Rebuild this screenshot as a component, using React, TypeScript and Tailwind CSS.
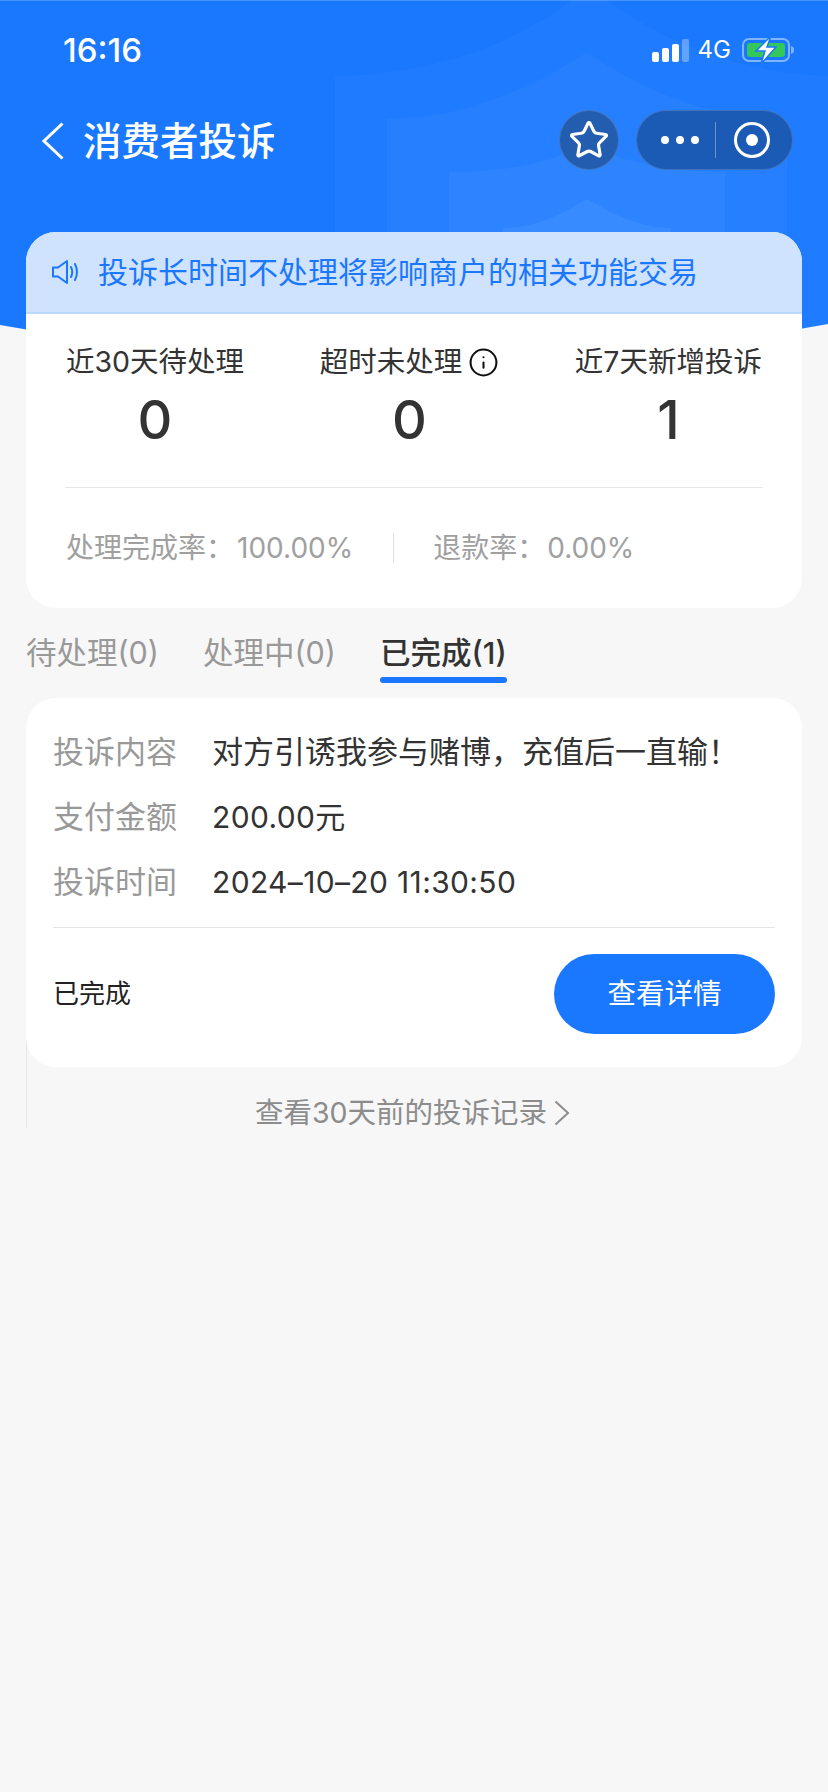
import { Star, Info } from 'lucide-react';

const FONT = 'font-[Inter,"Noto_Sans_CJK_SC",sans-serif]';

function StatusBar() {
  return (
    <div className="flex h-[100px] items-center justify-between pl-[63px] pr-[34px]">
      <span className="text-[33px] font-medium leading-[40px] text-white">16:16</span>
      <div className="flex items-center">
        {/* signal bars */}
        <svg width="37" height="23" viewBox="0 0 37 23" className="mr-[9px]">
          <rect x="0" y="13" width="7" height="10" rx="2" fill="#fff" />
          <rect x="10" y="9" width="7" height="14" rx="2" fill="#fff" />
          <rect x="20" y="5" width="7" height="18" rx="2" fill="#fff" />
          <rect x="30" y="0" width="7" height="23" rx="2" fill="#fff" fillOpacity="0.3" />
        </svg>
        <span className="text-[24px] leading-[30px] text-white">4G</span>
        <svg width="52" height="28" viewBox="0 0 52 28" className="ml-[11px]">
          <rect x="1" y="3" width="46" height="22" rx="6" fill="none" stroke="#fff" strokeOpacity="0.45" strokeWidth="2" />
          <rect x="5" y="7" width="38" height="14" rx="3" fill="#34c759" />
          <path d="M49 10c2 .5 3 2 3 4s-1 3.500-3 4z" fill="#fff" fillOpacity="0.45" />
          <path d="M29 0 14 15h9l-4 13 15-17h-9z" fill="#fff" stroke="#1a78ff" strokeWidth="1.500" />
        </svg>
      </div>
    </div>
  );
}

function NavBar() {
  return (
    <div className="mt-[11px] flex h-[60px] items-center pl-[42px] pr-[35px]">
      <svg width="22" height="38" viewBox="0 0 22 38" fill="none" className="shrink-0">
        <path d="M20.500 1.500 2 19l18.500 17.500" stroke="#fff" strokeWidth="3" />
      </svg>
      <span className="ml-[19px] text-[38.500px] font-medium leading-[60px] text-white">消费者投诉</span>
      <div className="mb-[2px] ml-auto flex items-center gap-[17px]">
        <div className="flex h-[60px] w-[60px] items-center justify-center rounded-full border border-white/15 bg-[#235db0]">
          <Star className="h-[42px] w-[42px] text-white" strokeWidth={1.800} />
        </div>
        <div className="flex h-[60px] w-[157px] items-center rounded-full border border-white/15 bg-[#1c5bb5] pl-[24px]">
          <div className="flex items-center gap-[7px]">
            <span className="h-[8px] w-[8px] rounded-full bg-white" />
            <span className="h-[8px] w-[8px] rounded-full bg-white" />
            <span className="h-[8px] w-[8px] rounded-full bg-white" />
          </div>
          <div className="ml-[16px] h-[36px] w-px bg-white/35" />
          <div className="ml-[18px] flex h-[36px] w-[36px] items-center justify-center rounded-full border-[3px] border-white">
            <span className="h-[12px] w-[12px] rounded-full bg-white" />
          </div>
        </div>
      </div>
    </div>
  );
}

function HeaderBg() {
  return (
    <svg width="828" height="340" viewBox="0 0 828 340" className="absolute left-0 top-0">
      <path d="M0 325 Q414 400 828 324 V0 H0Z" fill="#1a78ff" />
      <rect x="0" y="0" width="828" height="1" fill="#fff" fillOpacity="0.2" />
      {/* faint shield watermark */}
      <path d="M335 76 C440 74 520 40 572 0 H606 C670 45 740 72 828 76 V340 H335Z" fill="#fff" fillOpacity="0.025" />
      <path d="M387 119 C460 119 530 90 587 52 C640 90 710 119 787 119 V340 H387Z" fill="#fff" fillOpacity="0.035" />
      <path d="M449 172 C500 172 545 165 587 145 C630 165 680 172 725 172 V340 H449Z" fill="#fff" fillOpacity="0.04" />
      <path d="M503 228 C535 228 560 215 587 199 C615 215 640 228 671 228 V340 H503Z" fill="#fff" fillOpacity="0.05" />
    </svg>
  );
}

function Metric({ label, value, info }: { label: string; value: string; info?: boolean }) {
  return (
    <div className="flex flex-col items-center">
      <div className="flex items-center whitespace-nowrap text-[28.500px] leading-[40px] text-[#333]">
        {label}
        {info && <Info className="ml-[6px] h-[31px] w-[31px] text-[#111]" strokeWidth={1.600} />}
      </div>
      <div className="mt-[6px] text-[54px] font-medium leading-[64px] text-[#333]">{value}</div>
    </div>
  );
}

function OverviewCard() {
  return (
    <div className="relative mx-[26px] mt-[61px] overflow-hidden rounded-[30px] bg-white">
      <div className="flex h-[82px] items-center border-b-2 border-[#bdd8ff] bg-[#cfe2fe] pl-[26px]">
        <svg width="28" height="26" viewBox="0 0 28 26" fill="none" stroke="#1a78ff" strokeWidth="2">
          <path d="M1 8.500h5L15 2v22l-9-6.500H1z" strokeLinejoin="round" />
          <path d="M19 8c1.500 3 1.500 7 0 10M23 5c2.500 5 2.500 11 0 16" strokeLinecap="round" />
        </svg>
        <span className="ml-[18px] text-[30px] leading-[40px] text-[#1a78ff]">投诉长时间不处理将影响商户的相关功能交易</span>
      </div>
      <div className="px-[39px] pt-[28px]">
        <div className="flex justify-between border-b border-[#e6e6e6] pb-[35px] pl-[1px] pr-[1px]">
          <Metric label="近30天待处理" value="0" />
          <Metric label="超时未处理" value="0" info />
          <Metric label="近7天新增投诉" value="1" />
        </div>
        <div className="flex h-[120px] items-center pl-[1px] text-[28px] leading-[40px] text-[#a0a0a0]">
          <span>处理完成率：</span>
          <span className="ml-[3px]">100.00%</span>
          <div className="ml-[40px] h-[30px] w-px bg-[#e0e0e0]" />
          <span className="ml-[39px]">退款率：</span>
          <span className="ml-[2px]">0.00%</span>
        </div>
      </div>
    </div>
  );
}

function Tabs() {
  return (
    <div className="mx-[26px] mt-[23px] flex h-[67px] gap-[44px] text-[30.500px] leading-[44px] text-[#999]">
      <span>待处理(0)</span>
      <span>处理中(0)</span>
      <span className="relative h-[52px] font-medium text-[#333]">
        已完成(1)
        <span className="absolute bottom-0 left-0 right-0 h-[6px] rounded-full bg-[#1a78ff]" />
      </span>
    </div>
  );
}

function Row({ label, children, numeric }: { label: string; children: string; numeric?: boolean }) {
  return (
    <div className="flex h-[65px] items-center text-[31px] leading-[44px]">
      <span className="w-[159px] shrink-0 text-[#999]">{label}</span>
      <span className={numeric ? 'text-[30px] tracking-[0.350px] text-[#333]' : 'text-[#333]'}>{children}</span>
    </div>
  );
}

function ComplaintCard() {
  return (
    <div className="relative z-10 mx-[26px] rounded-[30px] bg-white px-[27px] pt-[21px]">
      <Row label="投诉内容">对方引诱我参与赌博，充值后一直输！</Row>
      <Row label="支付金额" numeric>200.00元</Row>
      <Row label="投诉时间" numeric>2024–10–20 11:30:50</Row>
      <div className="mt-[13px] h-px bg-[#e4e4e4]" />
      <div className="flex items-center justify-between pb-[33px] pt-[26px]">
        <span className="text-[26px] leading-[36px] text-[#222]">已完成</span>
        <button className="h-[80px] w-[221px] rounded-full bg-[#1a78ff] text-[28.500px] text-white">查看详情</button>
      </div>
    </div>
  );
}

export default function App() {
  return (
    <div className={`relative min-h-[1792px] w-[828px] overflow-hidden bg-[#f7f7f7] ${FONT}`}>
      <HeaderBg />
      <div className="relative">
        <StatusBar />
        <NavBar />
        <OverviewCard />
        <Tabs />
        <ComplaintCard />
        <div className="ml-[26px] mt-[-28px] flex h-[89px] items-start justify-center border-l border-[#e6e6e6] pr-[30px] pt-[52px] text-[28.500px] leading-[44px] text-[#8c8c8c]">
          查看30天前的投诉记录
          <svg width="16" height="26" viewBox="0 0 16 26" fill="none" className="ml-[7px] mt-[9px]">
            <path d="M1.500 1.500 14 13 1.500 24.500" stroke="#8c8c8c" strokeWidth="2" />
          </svg>
        </div>
      </div>
    </div>
  );
}
